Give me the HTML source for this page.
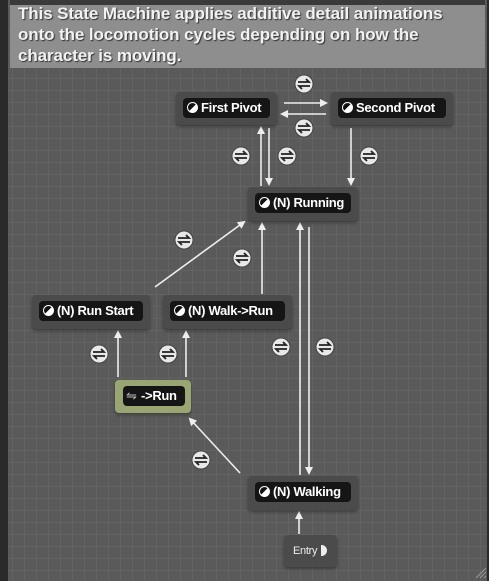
<!DOCTYPE html>
<html><head><style>
body{margin:0;width:489px;height:581px;overflow:hidden;background:#2a2a2a;font-family:"Liberation Sans",sans-serif}
#g{position:absolute;left:8px;top:0;width:479px;height:581px;background-color:#5a5a5a;
background-image:linear-gradient(#636363 1px,transparent 1px),linear-gradient(90deg,#636363 1px,transparent 1px);background-size:12px 12px;background-position:4px 6px}
#c{position:absolute;left:10px;top:0;width:475px;height:68px;background:#8e8e8e;border-top:5px solid #3a3a3a;box-sizing:border-box}
#c div{position:absolute;left:8px;top:-2px;color:#f2f2f2;font-weight:bold;font-size:17px;line-height:21px;text-shadow:1px 1px 1px #333;letter-spacing:-0.1px}
.n{position:absolute;background:#4b4b4b;border-radius:4px;box-shadow:0 2px 3px rgba(0,0,0,.35)}
.p{position:absolute;left:7px;right:7px;top:6px;height:20px;background:#151515;border-radius:4px;color:#fff;font-weight:bold;font-size:13px;letter-spacing:-0.3px;line-height:20px;white-space:nowrap;padding-left:18px;box-sizing:border-box}
.p i{position:absolute;left:4px;top:4px;width:11px;height:11px;border-radius:50%;background:linear-gradient(135deg,#111 50%,#fff 50%);border:1px solid #fff;box-sizing:border-box}
</style></head><body>
<div id="g"></div>
<div id="c"><div>This State Machine applies additive detail animations<br>onto the locomotion cycles depending on how the<br>character is moving.</div></div>
<svg style="position:absolute;left:0;top:0" width="489" height="581">
<defs><marker id="a" markerWidth="8" markerHeight="8" refX="6" refY="4" orient="auto" markerUnits="userSpaceOnUse"><path d="M0,0L8,4L0,8z" fill="#eee"/></marker>
<g id="t"><circle r="9" fill="#e8e8e8" stroke="#444" stroke-width="1"/><path d="M-6,-2H5L2,-5M6,2H-5L-2,5" stroke="#222" stroke-width="1.8" fill="none"/></g></defs>
<g stroke="#eee" stroke-width="1.6" fill="none" marker-end="url(#a)">
<line x1="284" y1="103" x2="326" y2="103"/><line x1="326" y1="114" x2="282" y2="114"/>
<line x1="261" y1="186" x2="261" y2="128"/><line x1="269" y1="128" x2="269" y2="184"/>
<line x1="351" y1="128" x2="351" y2="184"/>
<line x1="262" y1="294" x2="262" y2="224"/>
<line x1="300" y1="475" x2="300" y2="224"/><line x1="309" y1="227" x2="309" y2="473"/>
<line x1="155" y1="287" x2="244" y2="222"/>
<line x1="118" y1="377" x2="118" y2="332"/><line x1="186" y1="377" x2="186" y2="332"/>
<line x1="240" y1="473" x2="190" y2="419"/>
<line x1="299" y1="534" x2="299" y2="513"/>
</g>
<use href="#t" x="304" y="84"/><use href="#t" x="304" y="128"/><use href="#t" x="241" y="156"/><use href="#t" x="287" y="156"/><use href="#t" x="369" y="156"/><use href="#t" x="184" y="240"/><use href="#t" x="242" y="258"/><use href="#t" x="99" y="354"/><use href="#t" x="168" y="354"/><use href="#t" x="281" y="347"/><use href="#t" x="325" y="347"/><use href="#t" x="201" y="460"/>
<path d="M476,578L486,568M480,578L486,572M484,578L486,576" stroke="#999"/>
</svg>
<div class="n" style="left:176px;top:92px;width:101px;height:33px"><div class="p"><i></i>First Pivot</div></div>
<div class="n" style="left:331px;top:92px;width:122px;height:33px"><div class="p"><i></i>Second Pivot</div></div>
<div class="n" style="left:248px;top:187px;width:110px;height:34px"><div class="p"><i></i>(N) Running</div></div>
<div class="n" style="left:32px;top:295px;width:118px;height:34px"><div class="p"><i></i>(N) Run Start</div></div>
<div class="n" style="left:163px;top:295px;width:129px;height:34px"><div class="p"><i></i>(N) Walk-&gt;Run</div></div>
<div class="n" style="left:115px;top:380px;width:76px;height:33px;background:#9aa574"><div class="p" style="left:8px;right:6px">-&gt;Run<span style="position:absolute;left:3px;top:0;color:#bbb;font-weight:normal">&#8651;</span></div></div>
<div class="n" style="left:248px;top:476px;width:110px;height:34px"><div class="p"><i></i>(N) Walking</div></div>
<div class="n" style="left:284px;top:535px;width:53px;height:32px"><span style="position:absolute;left:9px;top:10px;color:#eee;font-size:11px;letter-spacing:-0.3px">Entry</span><span style="position:absolute;left:37px;top:10px;width:6px;height:11px;background:#eee;border-radius:0 6px 6px 0"></span></div>
</body></html>
